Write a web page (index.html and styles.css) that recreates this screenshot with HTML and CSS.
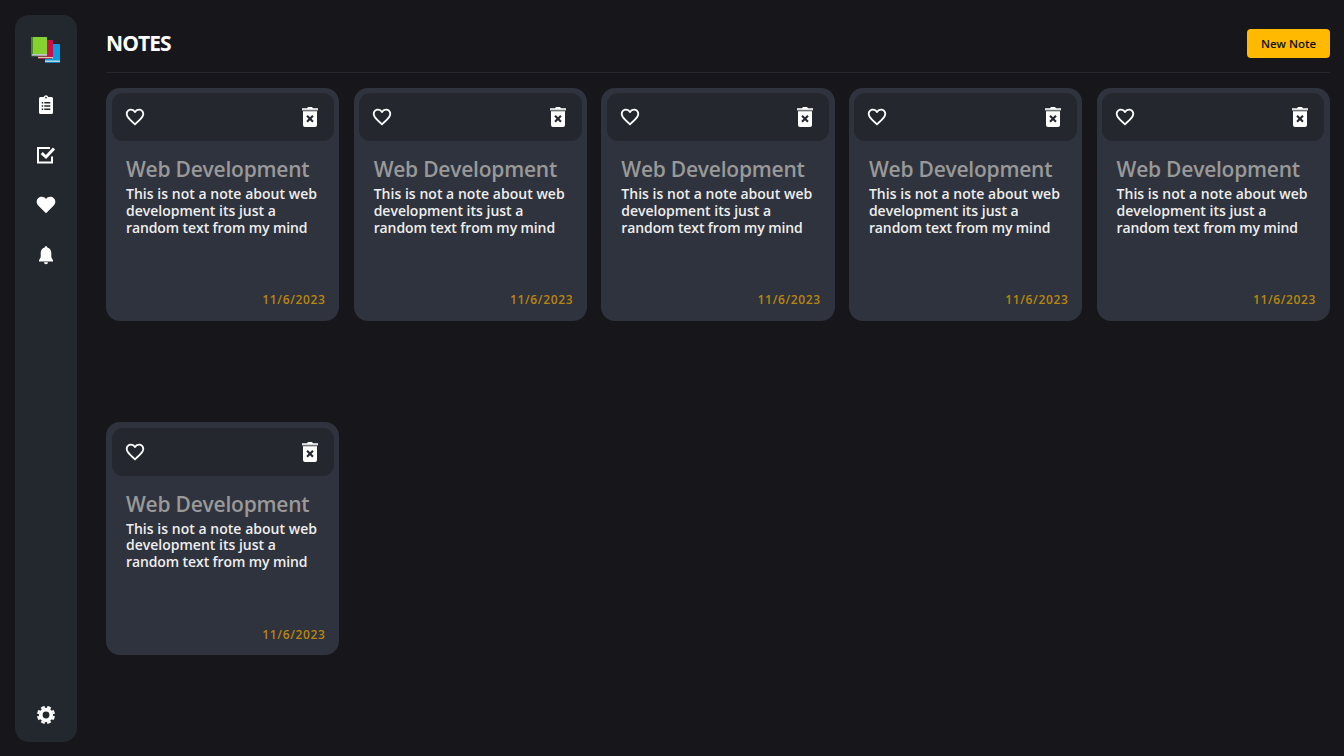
FILE: index.html
```html
<!DOCTYPE html>
<html lang="en">
<head>
<meta charset="utf-8">
<title>Notes</title>
<link rel="stylesheet" href="styles.css">
</head>
<body>
<svg class="symbols" aria-hidden="true">
  <symbol id="heart-line" viewBox="0 0 24 24"><path d="M16.5 3c-1.74 0-3.41.81-4.5 2.09C10.91 3.81 9.24 3 7.5 3 4.42 3 2 5.42 2 8.5c0 3.78 3.4 6.86 8.55 11.54L12 21.35l1.45-1.32C18.6 15.36 22 12.28 22 8.5 22 5.42 19.58 3 16.5 3zm-4.4 15.55l-.1.1-.1-.1C7.14 14.24 4 11.39 4 8.5 4 6.5 5.5 5 7.5 5c1.54 0 3.04.99 3.57 2.36h1.87C13.46 5.99 14.96 5 16.5 5c2 0 3.5 1.5 3.5 3.5 0 2.89-3.14 5.74-7.9 10.05z"/></symbol>
  <symbol id="trash" viewBox="0 0 16 20"><path d="M0 1.2h5L6 0h4l1 1.2h5v1.6H0z"/><path d="M0 2.4h16v1.200H0z" opacity=".6"/><path fill-rule="evenodd" d="M1 4.2h14V18a2 2 0 0 1-2 2H3a2 2 0 0 1-2-2zM5.800 8 4.300 9.500 6.500 11.800 4.300 14.100 5.800 15.600l2.200-2.300 2.200 2.300 1.500-1.500-2.200-2.300 2.200-2.300L10.200 8 8 10.300z"/></symbol>
</svg>
<div class="app">
  <nav class="sidebar">
    <svg class="logo" viewBox="0 0 30 28">
      <path fill="#079be2" d="M14 8h14q1 0 1 1v16H14z"/><path fill="#b5d7e2" d="M14 24.5h15V26H14z"/><path fill="#157bb5" d="M14 26h15v1H14z"/>
      <path fill="#c8104c" d="M7 4h14q1 0 1 1v17H7z"/><path fill="#e5c5ae" d="M7 21h15v1.5H7z"/><path fill="#9c1640" d="M7 22.3h14v.7H7z"/>
      <path fill="#84d12f" d="M0 2q0-1 1-1h15v17H0z"/><path fill="#4c8925" d="M0 2q0-1 1-1h1v17H0z"/><path fill="#b7c4c9" d="M1 18h15v1.8H1z"/><path fill="#467a35" d="M0 17.5h1V20h15v.6H1q-1 0-1-1z"/>
    </svg>
    <svg class="nav-icon" viewBox="0 0 20 20"><path fill-rule="evenodd" d="M4.5 2h3.2a2.4 2.4 0 0 1 4.6 0h3.2A1.5 1.5 0 0 1 17 3.500V17.500A1.500 1.500 0 0 1 15.500 19h-11A1.500 1.500 0 0 1 3 17.500v-14A1.500 1.500 0 0 1 4.500 2zM10 1.700a.9.9 0 1 0 0 1.800.9.9 0 0 0 0-1.800zM5.700 7v1.500h1.500V7zm2.600 0v1.500h6V7zm-2.600 3.200v1.500h1.500v-1.500zm2.600 0v1.500h6v-1.500zm-2.600 3.200v1.500h1.500v-1.500zm2.600 0v1.500h6v-1.500z"/></svg>
    <svg class="nav-icon" viewBox="0 0 20 20"><path fill="none" stroke="#fff" stroke-width="2" d="M14 3H2v14.500h14v-6"/><path fill="none" stroke="#fff" stroke-width="3" d="M5.700 8.200 10 12l8-8.500"/></svg>
    <svg class="nav-icon" viewBox="0 0 20 20"><path d="M10 18.300 2.500 10.800C-1.700 6.200 2.200 1.800 5.700 1.800c1.900 0 3.300.9 4.300 2.200 1-1.300 2.400-2.200 4.300-2.200 3.500 0 7.400 4.400 3.200 9z"/></svg>
    <svg class="nav-icon" viewBox="0 0 20 20"><path d="M10 1.300c.8 0 1.300.5 1.300 1.300 2.600.7 4 2.700 4 5.400v4.200L17 15.200v1.400H3v-1.400l1.700-3V8c0-2.700 1.400-4.700 4-5.400 0-.8.500-1.300 1.300-1.300zM8 17.300h4a2 2 0 0 1-4 0z"/></svg>
    <svg class="nav-icon settings" viewBox="0 0 20 20"><circle cx="10" cy="10" r="5.300" fill="none" stroke="#fff" stroke-width="3.800"/><circle cx="10" cy="10" r="8" pathLength="80" fill="none" stroke="#fff" stroke-width="2.200" stroke-dasharray="6 4" stroke-dashoffset="-2"/></svg>
  </nav>
  <main class="content">
    <header class="topbar"><h1 class="heading">NOTES</h1><button class="new-note">New Note</button></header>
    <section class="notes" id="notes"></section>
  </main>
</div>
<template id="note">
  <article class="note">
    <div class="note-bar"><svg class="heart"><use href="#heart-line"/></svg><svg class="trash"><use href="#trash"/></svg></div>
    <div class="note-body">
      <h2 class="note-title">Web Development</h2>
      <p class="note-text"><span class="first-line">This is not a note about web</span><br><span>development its just a</span><br><span class="last-line">random text from my mind</span></p>
      <time class="note-date">11/6/2023</time>
    </div>
  </article>
</template>
<script src="script.js"></script>
</body>
</html>
```
FILE: styles.css
```css
* { box-sizing: border-box; margin: 0; padding: 0; }
body { height: 100vh; overflow: hidden; background: #17161b; color: #fff; font-family: "Trebuchet MS", "Open Sans", sans-serif; }
.symbols { position: absolute; width: 0; height: 0; }
svg { display: block; fill: #fff; flex: none; }
.app { display: flex; height: 756px; padding: 15px 14px 14px 15px; gap: 29px; }
.sidebar { width: 62px; border-radius: 14px; background: #23282e; display: flex; flex-direction: column; align-items: center; padding: 21px 0 17px; }
.logo { width: 30px; height: 28px; margin-bottom: 30.500px; }
.nav-icon { width: 20px; height: 20px; margin-bottom: 30px; }
.settings { margin-top: auto; margin-bottom: 0; }
.content { flex: 1; min-width: 0; }
.topbar { height: 58px; border-bottom: 1px solid #24282e; display: flex; justify-content: space-between; align-items: center; }
.heading { font-size: 21px; font-weight: 700; line-height: 28px; letter-spacing: -.9px; margin-top: -1px; }
.new-note { width: 83px; height: 29px; margin-top: -1px; border: 0; border-radius: 4px; background: #ffba00; color: #111; font: 600 11.500px "Trebuchet MS", "Open Sans", sans-serif; white-space: nowrap; }
.notes { display: grid; grid-template-columns: repeat(5, 1fr); grid-auto-rows: 233px; column-gap: 14.2px; row-gap: 101.500px; padding-top: 14.500px; }
.note { border-radius: 14px; background: #2f333d; padding: 5.500px; display: flex; flex-direction: column; }
.note-bar { height: 48px; border-radius: 11px; background: #24282e; display: flex; align-items: center; justify-content: space-between; padding: 0 16px 0 12px; }
.heart { width: 22px; height: 22px; }
.trash { width: 16px; height: 20px; }
.note-body { flex: 1; display: flex; flex-direction: column; padding: 13px 9px 7px 14.500px; white-space: nowrap; }
.note-title { color: #999; font-size: 21px; font-weight: 600; line-height: 30px; letter-spacing: -.23px; }
.note-text { color: #eee; font-size: 14px; font-weight: 600; line-height: 16.800px; margin-top: 2px; }
.first-line { letter-spacing: .03px; }
.last-line { letter-spacing: -.1px; }
.note-date { margin-top: auto; align-self: flex-end; color: #b8860f; font-size: 12px; font-weight: 600; line-height: 17px; letter-spacing: .65px; margin-right: -.65px; }
```
FILE: script.js
```js
const list = document.getElementById("notes");
const template = document.getElementById("note");
for (let i = 0; i < 6; i++) list.append(template.content.cloneNode(true));
```
